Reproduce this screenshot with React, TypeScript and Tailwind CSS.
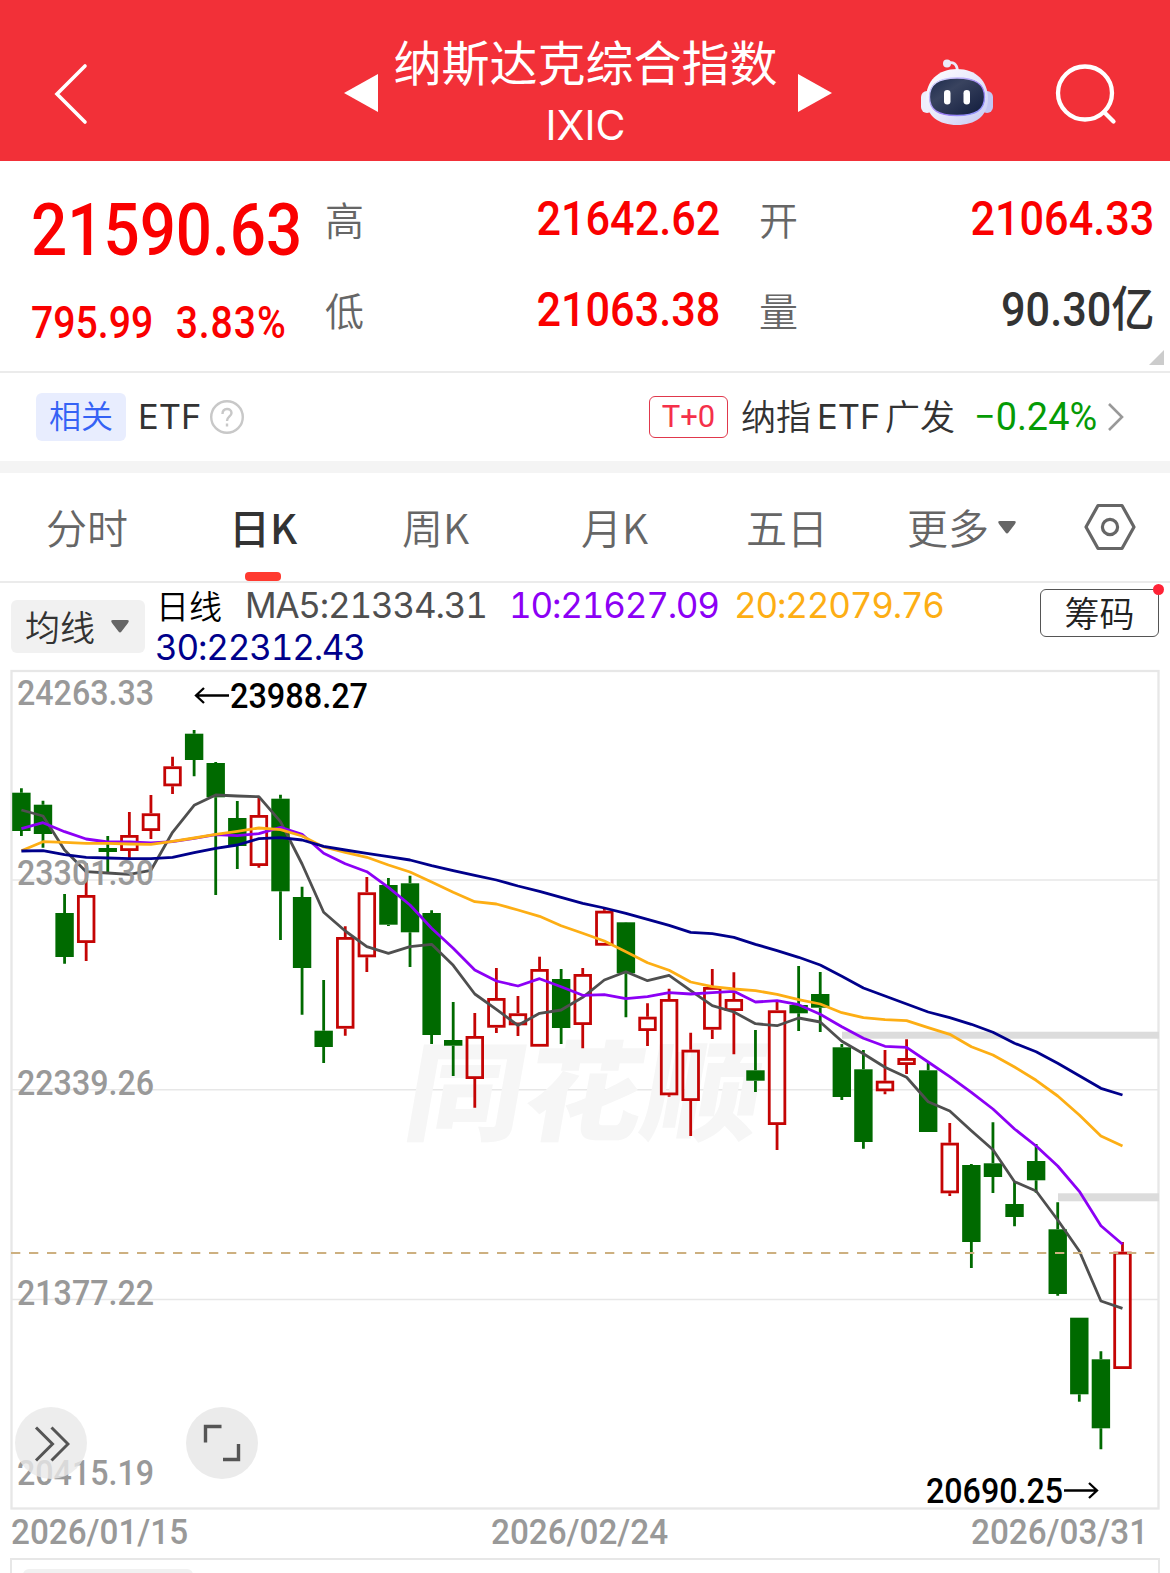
import React from 'react';
import clsx from 'clsx';

const CN = "font-['Noto_Sans_CJK_SC',sans-serif]";
const DIN = "font-['Roboto','Noto_Sans_CJK_SC',sans-serif] font-medium";

// [up, high, bodyTop, bodyBottom, low] for each trading day
const candles: [number, number, number, number, number][] = [
  [0, 788.3, 792.7, 831, 836],
  [0, 800.7, 804.7, 834, 847.7],
  [0, 894, 913, 957, 963.7],
  [1, 863.3, 895, 943, 961],
  [0, 836, 848, 852, 873],
  [1, 812, 835, 851, 858.3],
  [1, 795, 813.3, 831, 839],
  [1, 756.7, 766.3, 786.3, 794],
  [0, 730, 733.7, 760, 776.3],
  [0, 762, 763, 797.3, 895],
  [0, 801, 818, 846, 869],
  [1, 797.3, 815, 866, 867.7],
  [0, 794.7, 798.7, 891.3, 940],
  [0, 886.7, 897, 968, 1014.7],
  [0, 980, 1030.7, 1047, 1063],
  [1, 926.3, 937, 1028.7, 1035.7],
  [1, 877, 892.3, 957.3, 972],
  [0, 878, 885, 924.7, 926],
  [0, 875.7, 883.3, 932.3, 967],
  [0, 910.3, 913, 1035, 1044],
  [0, 1002, 1040, 1045.7, 1076],
  [1, 1013, 1036, 1079, 1107.7],
  [1, 968, 998, 1027.7, 1033],
  [1, 996, 1013.3, 1025.3, 1036],
  [1, 956.7, 969, 1046.7, 1046.7],
  [0, 969, 979, 1028, 1044],
  [1, 968, 974, 1025, 1048.3],
  [1, 908, 910.7, 945.7, 945.7],
  [0, 922, 922.3, 973.3, 1017.3],
  [1, 1003.3, 1016.7, 1031, 1046],
  [1, 988.7, 999, 1095.3, 1096.7],
  [1, 1032.7, 1049.7, 1101, 1136],
  [1, 969, 987, 1029.7, 1039],
  [1, 972.3, 999, 1011, 1054.3],
  [0, 1030, 1070.3, 1080.7, 1092],
  [1, 1000.3, 1010.3, 1125, 1150],
  [0, 966, 1005, 1013.3, 1031],
  [0, 972, 994, 1007.7, 1032],
  [0, 1044, 1047.3, 1097, 1100],
  [0, 1050, 1069.3, 1142, 1148.7],
  [1, 1050, 1080.7, 1091.3, 1094.3],
  [1, 1039.3, 1058, 1065, 1074],
  [0, 1062.7, 1070.3, 1132, 1132],
  [1, 1123, 1142.7, 1193.3, 1196],
  [0, 1164, 1165, 1242, 1268],
  [0, 1122.3, 1163.3, 1177, 1193],
  [0, 1182, 1204, 1217, 1226.3],
  [0, 1144, 1161, 1180.3, 1192.7],
  [0, 1202.3, 1229.3, 1294, 1295.7],
  [0, 1317.7, 1317.7, 1394.3, 1401.7],
  [0, 1351.3, 1359.3, 1428.3, 1449.3],
  [1, 1242, 1251.7, 1369, 1369],
];

const averages = [
  {
    color: '#4f4f4f',
    points: [810, 816, 850, 871.7, 873, 874.3, 870.3, 832.3, 805.3, 795, 796, 796.7, 821.7, 864, 912.3, 931, 946.7, 953.3, 946.7, 944.3, 965.3, 994, 1009.3, 1025.3, 1013.3, 1010, 997.3, 980, 971.7, 980.7, 975.3, 990.7, 1005.7, 1012, 1023.7, 1025.7, 1018, 1022, 1041.3, 1053.7, 1067.3, 1077.3, 1101.7, 1111, 1130.7, 1149.7, 1181.7, 1191, 1220, 1251, 1301, 1308.3],
  },
  {
    color: '#8c00f5',
    points: [828.7, 822.7, 831.7, 839, 842, 842, 843, 841.7, 838.3, 834.7, 835.7, 833.7, 827.3, 834.3, 853.3, 863.7, 871.7, 887.3, 905, 928.3, 948.3, 970, 981, 986, 978.7, 986.7, 995.3, 994.7, 998.7, 996.7, 992.7, 994, 992.7, 991.3, 1002, 1000.7, 1004.7, 1014.3, 1026.7, 1038.3, 1046.3, 1047.3, 1062, 1076.7, 1092.3, 1109, 1129, 1146, 1166, 1191.3, 1225.7, 1244.3],
  },
  {
    color: '#fdae14',
    points: [850.7, 841.7, 842.3, 843.3, 843.3, 844, 844.3, 841.3, 838, 834.3, 831.3, 828, 829.7, 836, 847, 852.3, 857.3, 865, 872, 882, 892.3, 901.7, 904, 910, 916.3, 925.7, 933.3, 941, 951.7, 962.7, 970.3, 982, 986.7, 989, 990.7, 994.3, 999.7, 1004, 1012.7, 1017.7, 1019.7, 1020.7, 1027.7, 1034.3, 1046.7, 1055, 1067, 1080.3, 1096, 1115, 1136, 1146],
  },
  {
    color: '#00008b',
    points: [851, 850.7, 854.7, 857.3, 858, 858.7, 858.7, 857.3, 852.7, 848.3, 845, 838.7, 837.7, 840, 846.3, 850, 853.3, 856.7, 860, 865.7, 870.7, 875.3, 880, 886, 891.3, 897.3, 903.3, 908, 913.3, 919.3, 925.3, 932.3, 933.7, 937.3, 944.3, 950.7, 957.3, 965, 976.3, 988, 996, 1004, 1012, 1017.7, 1024.3, 1032.3, 1043.3, 1051.7, 1063.3, 1075.7, 1088.3, 1095],
  },
];

const axisLabels = [
  { text: '24263.33', y: 705 },
  { text: '23301.30', y: 885 },
  { text: '22339.26', y: 1095 },
  { text: '21377.22', y: 1304.5 },
  { text: '20415.19', y: 1484.5 },
];

const xOf = (i: number) => 21.4 + i * 21.59;

const Robot = () => (
  <svg width="74" height="68" viewBox="0 0 74 68" className="ml-[88px] -mt-0.5">
    <defs>
      <linearGradient id="shell" x1="0" y1="0" x2="1" y2="1">
        <stop offset="0" stopColor="#ffffff" />
        <stop offset="0.55" stopColor="#e6e6fb" />
        <stop offset="1" stopColor="#c4c6f2" />
      </linearGradient>
      <linearGradient id="visor" x1="0" y1="0" x2="1" y2="1">
        <stop offset="0" stopColor="#1c2a4c" />
        <stop offset="0.35" stopColor="#39435f" />
        <stop offset="1" stopColor="#101b3c" />
      </linearGradient>
      <linearGradient id="rim" x1="0" y1="0" x2="1" y2="1">
        <stop offset="0" stopColor="#dfe4ff" />
        <stop offset="0.6" stopColor="#9a7bf5" />
        <stop offset="1" stopColor="#8f9cff" />
      </linearGradient>
    </defs>
    <path d="M27 5.500 C33 3 37 6 37.500 13" fill="none" stroke="#eceaf8" strokeWidth="2.800" />
    <circle cx="27" cy="5.500" r="4" fill="#ecebfa" />
    <rect x="1" y="33" width="12" height="22" rx="6" fill="#eeeefc" />
    <rect x="61" y="33" width="12" height="22" rx="6" fill="#c3c6f3" />
    <path d="M37 11 C56 11 68 23 68 41 C68 58 55 67 37 67 C19 67 6 58 6 41 C6 23 18 11 37 11Z" fill="url(#shell)" />
    <path d="M37 20 C56 20 64.500 26 64.500 39 C64.500 52 56 57.500 37 57.500 C18 57.500 9.500 52 9.500 39 C9.500 26 18 20 37 20Z" fill="url(#visor)" stroke="url(#rim)" strokeWidth="1.300" />
    <rect x="24" y="32" width="6.500" height="14.500" rx="3.200" fill="#fff" />
    <rect x="43.500" y="32" width="6.500" height="14.500" rx="3.200" fill="#fff" />
  </svg>
);

const Header = () => (
  <header className="flex h-[161px] items-center bg-[#f23038] pt-[25px] text-white">
    <svg width="36" height="62" viewBox="0 0 36 62" className="mt-px ml-[53px] shrink-0" fill="none" stroke="#fff" strokeWidth="3.600" strokeLinecap="round">
      <path d="M32 3 L4 31 L32 59" />
    </svg>
    <svg width="34" height="38" viewBox="0 0 34 38" className="ml-[255px] shrink-0">
      <path d="M34 0 V38 L0 19Z" fill="#fff" />
    </svg>
    <div className="flex w-[420px] shrink-0 flex-col items-center pt-[3px] pr-[5px]">
      <h1 className={clsx(CN, 'text-[48px] leading-[62px] whitespace-nowrap')}>纳斯达克综合指数</h1>
      <span className="font-['Inter',sans-serif] text-[41px] leading-[69px]">IXIC</span>
    </div>
    <svg width="34" height="38" viewBox="0 0 34 38" className="shrink-0">
      <path d="M0 0 V38 L34 19Z" fill="#fff" />
    </svg>
    <Robot />
    <svg width="62" height="62" viewBox="0 0 62 62" className="mt-px ml-[61px] shrink-0" fill="none" stroke="#fff" strokeWidth="4.300">
      <ellipse cx="30" cy="30" rx="27" ry="26.500" />
      <path d="M49 49 L58.500 58.500" strokeLinecap="round" />
    </svg>
  </header>
);

const Quote = ({ label, value, dark }: { label: string; value: string; dark?: boolean }) => (
  <div className="flex h-[91px] items-center justify-between">
    <span className={clsx(CN, 'text-[39px] leading-none font-[350] text-[#666]')}>{label}</span>
    <span className={clsx(DIN, 'origin-right scale-x-[.9] text-[48px] leading-none', dark ? 'text-[#333]' : 'text-[#fa0000]')}>{value}</span>
  </div>
);

const Summary = () => (
  <section className="relative flex h-[212px] border-b-2 border-[#ebebeb] pt-[12px] pl-[31px]">
    <div className="w-[294px]">
      <div className={clsx(DIN, 'origin-left scale-x-[.885] pt-[22px] text-[72px] leading-[72px] text-[#fa0000]')}>21590.63</div>
      <div className={clsx(DIN, 'flex origin-left scale-x-[.9] gap-[25px] pt-[29px] text-[43.500px] leading-[56px] whitespace-nowrap text-[#fa0000]')}>
        <span>795.99</span>
        <span className="tracking-[1px]">3.83%</span>
      </div>
    </div>
    <div className="w-[395px]">
      <Quote label="高" value="21642.62" />
      <Quote label="低" value="21063.38" />
    </div>
    <div className="ml-[39px] w-[395px]">
      <Quote label="开" value="21064.33" />
      <Quote label="量" value="90.30亿" dark />
    </div>
    <svg width="15" height="15" viewBox="0 0 15 15" className="absolute right-[6px] bottom-[6px]">
      <path d="M15 0 V15 H0Z" fill="#ccc" />
    </svg>
  </section>
);

const Related = () => (
  <section className={clsx(CN, 'flex h-[100px] items-center border-b-[12px] border-[#f4f4f4] pl-[36px] text-[#333]')}>
    <span className="flex h-[48px] w-[90px] shrink-0 items-center justify-center rounded-md bg-[#e8edfe] pb-[6px] text-[32px] font-[350] text-[#3562f5]">相关</span>
    <span className="ml-[12px] w-[63px] shrink-0 font-['Inter'] text-[34.500px]">ETF</span>
    <svg width="36" height="36" viewBox="0 0 36 36" className="ml-[8px] shrink-0" fill="none" stroke="#c8c8c8" strokeWidth="2.400">
      <circle cx="18" cy="18" r="15.800" />
      <path d="M13.500 15 C13.500 8.500 22.500 8.500 22.500 14 C22.500 17.500 18 17.500 18 22" />
      <path d="M18 24.500 V27.500" />
    </svg>
    <span className="ml-[404px] flex h-[42px] w-[79px] shrink-0 items-center justify-center rounded-md border-[1.500px] border-[#e0384c] font-['Roboto'] text-[31px] font-normal text-[#f5304a]">T+0</span>
    <span className="ml-[13px] flex w-[228px] shrink-0 items-center gap-[6px] pb-[3px] text-[35px] whitespace-nowrap">
      <span className="font-[350]">纳指</span>
      <span className="w-[62px] pt-[3px] font-['Inter'] text-[34.500px]">ETF</span>
      <span className="font-[350]">广发</span>
    </span>
    <span className="ml-[5px] w-[127px] shrink-0 origin-left scale-x-[.97] font-['Roboto'] text-[39px] whitespace-nowrap text-[#059b05]">−0.24%</span>
    <svg width="18" height="30" viewBox="0 0 18 30" className="ml-[6px] shrink-0" fill="none" stroke="#999" strokeWidth="2.600">
      <path d="M2 2 L15 15 L2 28" />
    </svg>
  </section>
);

const Caret = ({ className }: { className?: string }) => (
  <svg width="18" height="13" viewBox="0 0 18 13" className={className}>
    <path d="M2 0 H16 Q19 0 17 3 L10.500 11.500 Q9 13.500 7.500 11.500 L1 3 Q-1 0 2 0Z" fill="#666" />
  </svg>
);

const Tabs = () => (
  <nav className={clsx(CN, 'flex h-[110px] items-center border-b-2 border-[#ebebeb] text-[41px] font-[350] text-[#666] whitespace-nowrap')}>
    <span className="ml-[46px] w-[185px]">分时</span>
    <span className="relative w-[171px] font-medium text-[#333]">
      <span className="-ml-[2px]">日K</span>
      <i className="absolute top-[76px] left-[14px] h-[9px] w-[36px] rounded bg-[#ff3a30]" />
    </span>
    <span className="w-[179px]">周K</span>
    <span className="w-[165px]">月K</span>
    <span className="w-[161px]">五日</span>
    <span className="flex w-[177px] items-center">
      更多
      <Caret className="ml-[9px]" />
    </span>
    <svg width="52" height="48" viewBox="0 0 52 48" fill="none" stroke="#666" strokeWidth="3.200" strokeLinejoin="round">
      <path d="M14 2.500 H38 L50 24 L38 45.500 H14 L2 24Z" />
      <circle cx="26" cy="24" r="7.600" />
    </svg>
  </nav>
);

const MaBar = () => (
  <section className="flex h-[86px] items-start font-['Inter'] text-[35px] leading-[42px] whitespace-nowrap tabular-nums">
    <div className={clsx(CN, 'mt-[17px] ml-[11px] flex h-[53px] w-[134px] items-center rounded-md bg-[#f1f1f1] pb-[2px] pl-[14px] text-[35px] font-[350] text-[#333]')}>
      均线
      <Caret className="mt-[2px] ml-[16px]" />
    </div>
    <div className="ml-[10px] w-[885px] tracking-[-1.200px]">
      <div className="flex h-[43px] items-center">
        <span className={clsx(CN, 'ml-[1px] w-[89px] text-[33px] tracking-normal text-black font-[350]')}>日线</span>
        <span className="w-[264px] text-[#4f4f4f]">MA5:21334.31</span>
        <span className="w-[225px] text-[#8c00f5]">10:21627.09</span>
        <span className="text-[#fdae14]">20:22079.76</span>
      </div>
      <div className="text-[#00008b]">30:22312.43</div>
    </div>
    <div className={clsx(CN, 'relative mt-[6px] flex h-[48px] w-[119px] items-center justify-center rounded-md border-[1.500px] border-[#555] pb-[3px] text-[35px] font-[350] text-[#222]')}>
      筹码
      <i className="absolute -top-[6px] -right-[6px] size-[11px] rounded-full bg-[#ff2236]" />
    </div>
  </section>
);

const Chart = () => (
  <div className="relative h-[841px]">
    <svg width="1170" height="841" viewBox="0 669 1170 841" className="block overflow-visible">
      <g stroke="#e7e7e7">
        <rect x="11.500" y="671" width="1147" height="837.500" fill="none" strokeWidth="2.300" />
        <path d="M12 880 H1158 M12 1089.700 H1158 M12 1299.500 H1158" strokeWidth="1.500" />
      </g>
      <text x="400" y="1132" transform="translate(200 0) skewX(-10)" textLength="356" lengthAdjust="spacingAndGlyphs" fontSize="108" fontWeight="900" fill="#f6f6f6" fontFamily="Noto Sans CJK SC, sans-serif">同花顺</text>
      <rect x="842" y="1031.700" width="317" height="7" fill="#dcdcdc" />
      <rect x="1058" y="1193.300" width="101" height="8" fill="#dcdcdc" />

      {candles.map(([up, high, top, bottom, low], i) => {
        const x = xOf(i);
        const color = up ? '#c40404' : '#006a00';
        return (
          <g key={i} stroke={color} strokeWidth="2.800">
            <path d={`M${x} ${high} V${top} M${x} ${bottom} V${low}`} />
            {up ? (
              <rect x={x - 7.8} y={top + 1.4} width="15.600" height={bottom - top - 2.8} fill="none" />
            ) : (
              <rect x={x - 9.2} y={top} width="18.400" height={bottom - top} fill={color} stroke="none" />
            )}
          </g>
        );
      })}

      {averages.map(({ color, points }) => (
        <polyline key={color} points={points.map((y, i) => `${xOf(i)},${y}`).join(' ')} fill="none" stroke={color} strokeWidth="2.800" strokeLinejoin="round" />
      ))}

      <path d="M11 1253 H1158" stroke="#cdb080" strokeWidth="1.800" strokeDasharray="9.300 8.700" />

      <g fontFamily="Roboto, sans-serif" fontWeight="500" fontSize="35">
        {axisLabels.map(({ text, y }) => (
          <text key={text} x="17" y={y} textLength="137" lengthAdjust="spacingAndGlyphs" fill="#999">{text}</text>
        ))}
        <text x="230" y="708" textLength="138" lengthAdjust="spacingAndGlyphs">23988.27</text>
        <text x="926" y="1503" textLength="137" lengthAdjust="spacingAndGlyphs">20690.25</text>
      </g>
      <g fill="none" stroke="#000" strokeWidth="2.300">
        <path d="M229 695.500 H196 M204 688 L196 695.500 L204 703" />
        <path d="M1064 1490.500 H1097 M1089 1483 L1097 1490.500 L1089 1498" />
      </g>
    </svg>
    <button className="absolute top-[738px] left-[15px] flex size-[72px] items-center justify-center rounded-full bg-[#e8e8e8]/80">
      <svg width="36" height="36" viewBox="0 0 36 36" className="mt-px ml-[2px]" fill="none" stroke="#555" strokeWidth="3">
        <path d="M2 1.500 L18.500 18 L2 34.500 M17.500 1.500 L34 18 L17.500 34.500" />
      </svg>
    </button>
    <button className="absolute top-[738px] left-[186px] flex size-[72px] items-center justify-center rounded-full bg-[#ebebeb]">
      <svg width="38" height="38" viewBox="0 0 38 38" fill="none" stroke="#555" strokeWidth="3.400">
        <path d="M2.500 18.500 V2.500 H18.500 M35.500 20 V35.500 H20" />
      </svg>
    </button>
  </div>
);

const Dates = () => (
  <div className="flex h-[48px] items-center justify-between pr-[21px] pb-[3px] pl-[11px] font-['Roboto'] text-[35px] leading-none font-medium text-[#999]">
    <span className="w-[178px] origin-left scale-x-[.95]">2026/01/15</span>
    <span className="w-[178px] origin-left scale-x-[.95]">2026/02/24</span>
    <span className="w-[178px] origin-left scale-x-[.95]">2026/03/31</span>
  </div>
);

const App = () => {
  return (
    <div className="h-[1573px] w-[1170px] overflow-hidden bg-white">
      <Header />
      <Summary />
      <Related />
      <Tabs />
      <MaBar />
      <Chart />
      <Dates />
      <div className="mr-[10px] ml-[10px] h-[40px] border-2 border-[#e7e7e7] pt-[9px] pl-[11px]">
        <div className="h-[30px] w-[170px] rounded-md bg-[#f1f1f1]" />
      </div>
    </div>
  );
};

export default App;
